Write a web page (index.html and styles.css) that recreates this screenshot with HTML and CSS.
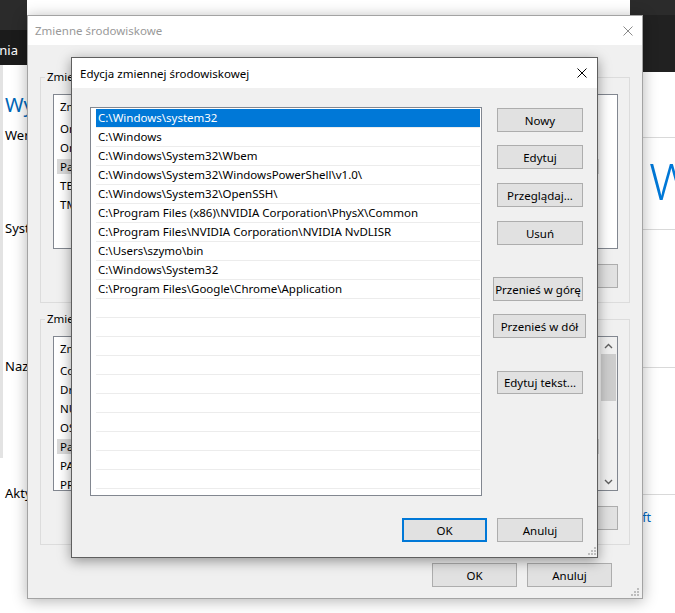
FILE: index.html
```html
<!DOCTYPE html>
<html lang="pl">
<head>
<meta charset="utf-8">
<title>Edycja zmiennej środowiskowej</title>
<link rel="stylesheet" href="styles.css">
</head>
<body>
<div class="desktop">
  <div class="settings">
    <div class="set-left">
      <div class="set-top"></div>
      <div class="set-nav"><span>Ustawienia</span></div>
      <div class="set-page">
        <div class="set-h">Wyświetl informacje</div>
        <div class="set-t t-wer">Wersja</div>
        <div class="set-t t-sys">System</div>
        <div class="set-t t-naz">Nazwa</div>
        <div class="set-t t-akt">Aktywacja</div>
      </div>
    </div>
    <div class="set-mid"></div>
    <div class="set-right">
      <div class="sr-top"></div>
      <div class="sr-bar"></div>
      <div class="sr-a"></div>
      <div class="sr-b"><span class="logo">Windows</span></div>
      <div class="sr-c"></div>
      <div class="sr-d"></div>
      <div class="sr-link"><span>Microsoft</span></div>
    </div>
  </div>

  <div class="dlg env">
    <div class="titlebar">
      <span class="title">Zmienne środowiskowe</span>
      <svg class="close" width="10" height="10" viewBox="0 0 10 10"><path d="M0.5 0.5L9.5 9.5M9.5 0.5L0.5 9.5" stroke="#8a8a8a" stroke-width="1" fill="none"/></svg>
    </div>
    <div class="env-body">
      <fieldset class="group">
        <legend>Zmienne użytkownika dla szymo</legend>
        <div class="listview lv-user">
          <div class="lv-items">
            <div class="lv-head">Zmienna</div>
            <div class="lv-row"><span>OneDrive</span></div>
            <div class="lv-row"><span>OneDriveConsumer</span></div>
            <div class="lv-row hl"><span>Path</span></div>
            <div class="lv-row"><span>TEMP</span></div>
            <div class="lv-row"><span>TMP</span></div>
          </div>
        </div>
        <div class="btn-row">
          <button class="btn">Nowy...</button>
          <button class="btn">Edytuj...</button>
          <button class="btn">Usuń</button>
        </div>
      </fieldset>
      <fieldset class="group group2">
        <legend>Zmienne systemowe</legend>
        <div class="listview lv-sys">
          <div class="lv-items">
            <div class="lv-head">Zmienna</div>
            <div class="lv-row"><span>ComSpec</span></div>
            <div class="lv-row"><span>DriverData</span></div>
            <div class="lv-row"><span>NUMBER_OF_PROCESSORS</span></div>
            <div class="lv-row"><span>OS</span></div>
            <div class="lv-row hl"><span>Path</span></div>
            <div class="lv-row"><span>PATHEXT</span></div>
            <div class="lv-row"><span>PROCESSOR_ARCHITECTURE</span></div>
          </div>
          <div class="scrollbar">
            <div class="sb-btn"><svg width="9" height="6" viewBox="0 0 9 6"><path d="M1 5L4.5 1.5L8 5" stroke="#606060" stroke-width="1.4" fill="none"/></svg></div>
            <div class="sb-track"><div class="sb-thumb"></div></div>
            <div class="sb-btn"><svg width="9" height="6" viewBox="0 0 9 6"><path d="M1 1L4.5 4.5L8 1" stroke="#606060" stroke-width="1.4" fill="none"/></svg></div>
          </div>
        </div>
        <div class="btn-row">
          <button class="btn">Nowy...</button>
          <button class="btn">Edytuj...</button>
          <button class="btn">Usuń</button>
        </div>
      </fieldset>
      <div class="actions env-actions">
        <button class="btn">OK</button>
        <button class="btn">Anuluj</button>
      </div>
    </div>
    <svg class="grip env-grip" width="10" height="10" viewBox="0 0 10 10"><g fill="#bdbdbd"><rect x="8" y="2" width="2" height="2"/><rect x="8" y="5" width="2" height="2"/><rect x="5" y="5" width="2" height="2"/><rect x="8" y="8" width="2" height="2"/><rect x="5" y="8" width="2" height="2"/><rect x="2" y="8" width="2" height="2"/></g></svg>
  </div>

  <div class="dlg edit">
    <div class="titlebar">
      <span class="title">Edycja zmiennej środowiskowej</span>
      <svg class="close" width="10" height="10" viewBox="0 0 10 10"><path d="M0.5 0.5L9.5 9.5M9.5 0.5L0.5 9.5" stroke="#000" stroke-width="1" fill="none"/></svg>
    </div>
    <div class="edit-body">
      <div class="edit-main">
        <div class="listbox">
          <div class="lb-row sel">C:\Windows\system32</div>
          <div class="lb-row">C:\Windows</div>
          <div class="lb-row">C:\Windows\System32\Wbem</div>
          <div class="lb-row">C:\Windows\System32\WindowsPowerShell\v1.0\</div>
          <div class="lb-row">C:\Windows\System32\OpenSSH\</div>
          <div class="lb-row">C:\Program Files (x86)\NVIDIA Corporation\PhysX\Common</div>
          <div class="lb-row">C:\Program Files\NVIDIA Corporation\NVIDIA NvDLISR</div>
          <div class="lb-row">C:\Users\szymo\bin</div>
          <div class="lb-row">C:\Windows\System32</div>
          <div class="lb-row">C:\Program Files\Google\Chrome\Application</div>
          <div class="lb-row"></div>
          <div class="lb-row"></div>
          <div class="lb-row"></div>
          <div class="lb-row"></div>
          <div class="lb-row"></div>
          <div class="lb-row"></div>
          <div class="lb-row"></div>
          <div class="lb-row"></div>
          <div class="lb-row"></div>
          <div class="lb-row"></div>
        </div>
        <div class="side">
          <button class="btn b-new">Nowy</button>
          <button class="btn b-edit">Edytuj</button>
          <button class="btn b-browse">Przeglądaj...</button>
          <button class="btn b-del">Usuń</button>
          <button class="btn b-up">Przenieś w górę</button>
          <button class="btn b-down">Przenieś w dół</button>
          <button class="btn b-text">Edytuj tekst...</button>
        </div>
      </div>
      <div class="actions edit-actions">
        <button class="btn ok">OK</button>
        <button class="btn">Anuluj</button>
      </div>
    </div>
    <svg class="grip edit-grip" width="10" height="10" viewBox="0 0 10 10"><g fill="#bdbdbd"><rect x="8" y="2" width="2" height="2"/><rect x="8" y="5" width="2" height="2"/><rect x="5" y="5" width="2" height="2"/><rect x="8" y="8" width="2" height="2"/><rect x="5" y="8" width="2" height="2"/><rect x="2" y="8" width="2" height="2"/></g></svg>
  </div>
</div>
</body>
</html>
```

FILE: styles.css
```css
* { box-sizing: border-box; }
html, body { margin: 0; padding: 0; }
body {
  width: 675px;
  height: 613px;
  overflow: hidden;
  font-family: "Noto Sans", "Liberation Sans", sans-serif;
  font-size: 11.5px;
  color: #000;
}
.desktop {
  position: relative;
  width: 675px;
  height: 613px;
  overflow: hidden;
  background: #fff;
}

/* background settings window */
.settings {
  position: absolute;
  inset: 0;
  display: flex;
}
.set-left {
  width: 27px;
  display: flex;
  flex-direction: column;
  overflow: hidden;
}
.set-top { height: 30px; background: #2b2b2b; flex: none; }
.set-nav {
  height: 35px;
  flex: none;
  background: #1b1b1b;
  color: #fff;
  font-size: 13px;
  display: flex;
  justify-content: flex-end;
  align-items: center;
  padding: 4px 9px 0 0;
  white-space: nowrap;
}
.set-page {
  flex: 1;
  background: linear-gradient(to right, #e3e3e3 3px, transparent 3px) 0 0 / 100% 393px no-repeat, #fff;
  padding-left: 5px;
  white-space: nowrap;
  font-size: 13px;
  display: flex;
  flex-direction: column;
}
.set-h { margin-top: 28px; line-height: 24px; font-size: 20px; color: #0067b8; }
.set-t { line-height: 18px; }
.t-wer { margin-top: 9px; }
.t-sys { margin-top: 75px; }
.t-naz { margin-top: 120px; }
.t-akt { margin-top: 109px; }
.set-mid { flex: 1; background: #fff; }
.set-right {
  width: 45px;
  display: flex;
  flex-direction: column;
  background: #fff;
}
.sr-top { height: 15px; background: #2b2b2b; flex: none; }
.sr-bar { height: 57px; background: #212121; flex: none; }
.sr-a { height: 66px; border-bottom: 1px solid #d9d9d9; flex: none; }
.sr-b {
  height: 92px;
  flex: none;
  border-bottom: 1px solid #d9d9d9;
  display: flex;
  align-items: center;
  padding: 0 0 6px 19px;
  overflow: hidden;
  white-space: nowrap;
}
.logo { font-size: 50px; font-weight: 300; color: #0078d7; line-height: 1; }
.sr-c { height: 138px; border-bottom: 1px solid #d9d9d9; flex: none; }
.sr-d { height: 127px; border-bottom: 1px solid #d9d9d9; flex: none; }
.sr-link {
  width: 21px;
  margin-top: 16px;
  line-height: 14px;
  font-size: 12.5px;
  color: #0067c0;
  display: flex;
  justify-content: flex-end;
  white-space: nowrap;
}

/* dialogs */
.dlg {
  position: absolute;
  display: flex;
  flex-direction: column;
  background: #f0f0f0;
}
.titlebar {
  flex: none;
  background: #fff;
  display: flex;
  align-items: center;
  white-space: nowrap;
}
.close { margin-left: auto; flex: none; }
.grip { position: absolute; }

.btn {
  font-family: inherit;
  font-size: 11.5px;
  color: #000;
  background: #e1e1e1;
  border: 1px solid #adadad;
  padding: 0;
  margin: 0;
  width: 86px;
  height: 24px;
  flex: none;
  white-space: nowrap;
}
.actions { display: flex; justify-content: flex-end; gap: 10px; }

/* middle dialog */
.env {
  left: 27px;
  top: 15px;
  width: 616px;
  height: 584px;
  border: 1px solid #a3a3a3;
  box-shadow: 0 2px 14px rgba(0, 0, 0, 0.3);
}
.env .titlebar { height: 29px; padding: 0 9px 0 7px; color: #999; }
.env-body { flex: 1; padding: 24px 12px 0 12px; display: flex; flex-direction: column; }
.group {
  margin: 0;
  padding: 9px 11px 14px 12px;
  border: 1px solid #dcdcdc;
  min-width: 0;
}
.group legend {
  padding: 0 2px;
  margin-left: -8px;
  line-height: 16px;
  font-size: 11.5px;
  white-space: nowrap;
}
.group2 { margin-top: 8px; }
.listview {
  height: 155px;
  background: #fff;
  border: 1px solid #828790;
  display: flex;
  overflow: hidden;
}
.lv-items { flex: 1; display: flex; flex-direction: column; white-space: nowrap; overflow: hidden; }
.lv-head { height: 24px; line-height: 24px; padding-left: 6px; flex: none; }
.lv-row { height: 19px; flex: none; padding: 2px 0 2px 3px; display: flex; }
.lv-row span { flex: none; width: 542px; line-height: 15px; padding-left: 3px; }
.lv-row.hl span { background: #d9d9d9; }
.scrollbar { width: 17px; flex: none; background: #f0f0f0; display: flex; flex-direction: column; }
.sb-btn { height: 17px; flex: none; display: flex; align-items: center; justify-content: center; }
.sb-track { flex: 1; padding: 0 1px; }
.sb-thumb { height: 47px; background: #cdcdcd; }
.btn-row { display: flex; justify-content: flex-end; gap: 10px; margin-top: 15px; }
.env-actions { margin-top: 18px; padding-right: 18px; }
.env-actions .btn { width: 85px; }
.env-grip { right: 3px; bottom: 2px; }

/* front dialog */
.edit {
  left: 71px;
  top: 57px;
  width: 527px;
  height: 501px;
  border: 1px solid #5f5f5f;
  box-shadow: 0 3px 12px rgba(0, 0, 0, 0.4);
}
.edit .titlebar { height: 30px; padding: 0 10px 0 8px; }
.edit-body { flex: 1; padding: 19px 14px 0 18px; display: flex; flex-direction: column; }
.edit-main { display: flex; gap: 11px; }
.listbox {
  width: 392px;
  height: 389px;
  flex: none;
  background: #fff;
  border: 1px solid #828790;
  padding: 1px 1px 0 5px;
  overflow: hidden;
}
.lb-row {
  height: 19px;
  line-height: 18px;
  border-bottom: 1px solid #ececec;
  padding-left: 2px;
  white-space: nowrap;
}
.lb-row.sel { background: #0078d7; color: #fff; }
.side { display: flex; flex-direction: column; align-items: flex-start; padding-top: 1px; }
.b-new, .b-edit, .b-browse, .b-del, .b-text { margin-left: 4px; }
.b-edit { margin-top: 13px; }
.b-browse { margin-top: 14px; }
.b-del { margin-top: 14px; }
.b-up { margin-top: 32px; width: 90px; }
.b-down { margin-top: 13px; width: 93px; }
.b-text { margin-top: 33px; height: 23px; }
.edit-actions { margin-top: 22px; }
.btn.ok { border: 2px solid #0078d7; width: 85px; }
.edit-grip { right: 1px; bottom: 2px; }
```
